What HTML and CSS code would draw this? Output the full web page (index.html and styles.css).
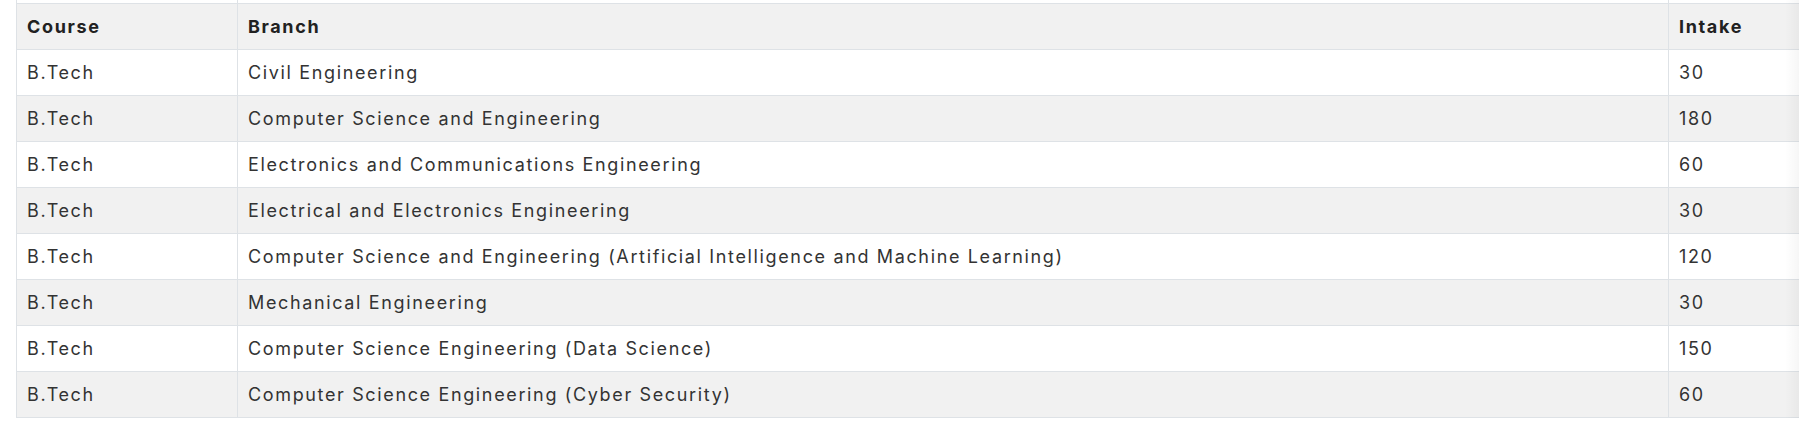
FILE: index.html
```html
<!DOCTYPE html>
<html lang="en">
<head>
<meta charset="utf-8">
<title>Intake</title>
<link rel="stylesheet" href="styles.css">
</head>
<body>
<div class="scroller">
  <table class="intake">
    <colgroup>
      <col class="c-course">
      <col class="c-branch">
      <col class="c-intake">
    </colgroup>
    <tbody>
      <tr class="cut"><td></td><td></td><td></td></tr>
      <tr class="head"><th>Course</th><th>Branch</th><th>Intake</th></tr>
      <tr><td>B.Tech</td><td>Civil Engineering</td><td>30</td></tr>
      <tr><td>B.Tech</td><td>Computer Science and Engineering</td><td>180</td></tr>
      <tr><td>B.Tech</td><td>Electronics and Communications Engineering</td><td>60</td></tr>
      <tr><td>B.Tech</td><td>Electrical and Electronics Engineering</td><td>30</td></tr>
      <tr><td>B.Tech</td><td>Computer Science and Engineering (Artificial Intelligence and Machine Learning)</td><td>120</td></tr>
      <tr><td>B.Tech</td><td>Mechanical Engineering</td><td>30</td></tr>
      <tr><td>B.Tech</td><td>Computer Science Engineering (Data Science)</td><td>150</td></tr>
      <tr><td>B.Tech</td><td>Computer Science Engineering (Cyber Security)</td><td>60</td></tr>
    </tbody>
  </table>
</div>
</body>
</html>
```
FILE: styles.css
```css
html, body {
  margin: 0;
  padding: 0;
  background: #ffffff;
}

body {
  font-family: Inter, "DejaVu Sans", sans-serif;
  color: #333333;
  overflow: hidden;
}

.scroller {
  position: relative;
  padding-left: 16px;
  overflow: hidden;
  width: calc(1799px - 16px);
}

.scroller::after {
  content: "";
  position: absolute;
  top: 0;
  right: 0;
  width: 14px;
  height: 100%;
  background: linear-gradient(to right, rgba(0, 0, 0, 0), rgba(0, 0, 0, 0.035));
  pointer-events: none;
}

.intake {
  border-collapse: collapse;
  table-layout: fixed;
  width: 1820px;
  font-size: 18px;
  line-height: 21px;
  letter-spacing: 1.64px;
}

.c-course { width: 221px; }
.c-branch { width: 1431px; }
.c-intake { width: 168px; }

.intake th,
.intake td {
  border: 1px solid #dee2e6;
  padding: 12px 10px;
  text-align: left;
  vertical-align: top;
  white-space: nowrap;
}

.intake th {
  font-weight: 700;
  color: #212121;
}

.intake tr.cut td {
  padding: 0;
  height: 3px;
  border-top: none;
}

.intake tr:nth-child(odd) {
  background: #ffffff;
}

.intake tr:nth-child(even) {
  background: #f1f1f1;
}
```
